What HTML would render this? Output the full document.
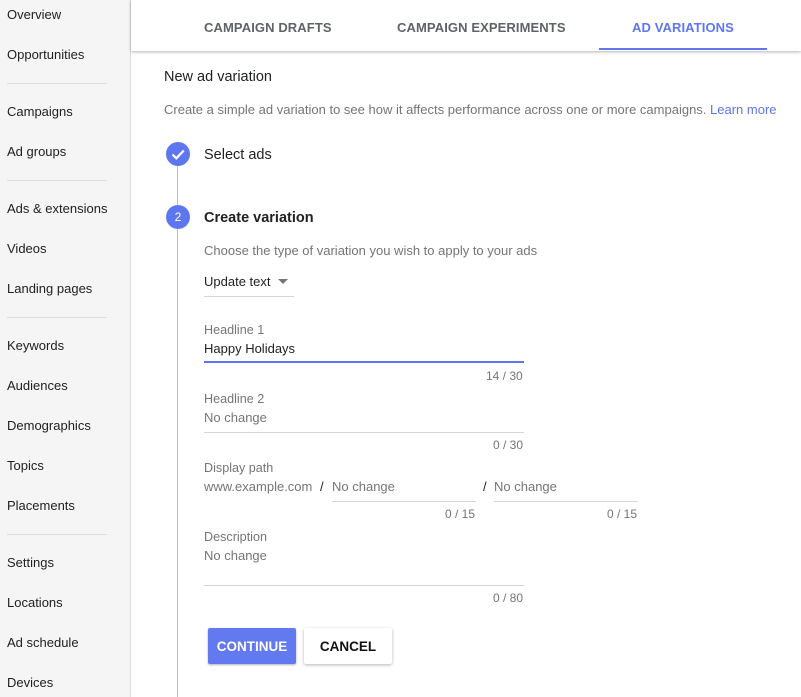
<!DOCTYPE html>
<html><head><style>
*{margin:0;padding:0;box-sizing:border-box}
body{width:801px;height:697px;overflow:hidden;background:#fff;font-family:"Liberation Sans",Arial,sans-serif;position:relative;color:#202124}
.side{position:absolute;left:0;top:0;width:131px;height:697px;background:#f5f5f5;border-right:1px solid #ddd}
.si{position:absolute;left:7px;font-size:13px;color:#212121;line-height:16px;margin-top:1px}
.dv{position:absolute;left:7px;width:100px;height:1px;background:#ddd}
.t{position:absolute;font-size:13px;line-height:16px;white-space:nowrap;margin-top:1px}
.tab{position:absolute;top:20px;font-size:13px;color:#5f6368;font-weight:bold;letter-spacing:.1px}
.ln{position:absolute;height:1px;background:#d6d6d6}
.g{color:#757575}
.c{position:absolute;font-size:12px;color:#757575;margin-top:1px}
</style></head><body>
<div class="side">
<div class="si" style="top:6px">Overview</div>
<div class="si" style="top:46px">Opportunities</div>
<div class="dv" style="top:83px"></div>
<div class="si" style="top:103px">Campaigns</div>
<div class="si" style="top:143px">Ad groups</div>
<div class="dv" style="top:180px"></div>
<div class="si" style="top:200px">Ads &amp; extensions</div>
<div class="si" style="top:240px">Videos</div>
<div class="si" style="top:280px">Landing pages</div>
<div class="dv" style="top:317px"></div>
<div class="si" style="top:337px">Keywords</div>
<div class="si" style="top:377px">Audiences</div>
<div class="si" style="top:417px">Demographics</div>
<div class="si" style="top:457px">Topics</div>
<div class="si" style="top:497px">Placements</div>
<div class="dv" style="top:534px"></div>
<div class="si" style="top:554px">Settings</div>
<div class="si" style="top:594px">Locations</div>
<div class="si" style="top:634px">Ad schedule</div>
<div class="si" style="top:674px">Devices</div>
</div>
<div style="position:absolute;left:131px;top:0;width:670px;height:51px;background:#fff;box-shadow:0 1px 3px rgba(0,0,0,.3)"></div>
<div class="tab" style="left:204px">CAMPAIGN DRAFTS</div>
<div class="tab" style="left:397px">CAMPAIGN EXPERIMENTS</div>
<div class="tab" style="left:632px;color:#5e76f0">AD VARIATIONS</div>
<div style="position:absolute;left:599px;top:48px;width:168px;height:2px;background:#5e76f0"></div>

<div class="t" style="left:164px;top:68px;font-size:14.5px">New ad variation</div>
<div class="t g" style="left:164px;top:101px;font-size:13px">Create a simple ad variation to see how it affects performance across one or more campaigns. <span style="color:#5e76f0">Learn more</span></div>

<div style="position:absolute;left:177px;top:165px;width:1px;height:532px;background:#bdbdbd"></div>
<div style="position:absolute;left:166px;top:142px;width:24px;height:24px;border-radius:50%;background:#5e76f0"><svg width="24" height="24"><path d="M6.5 12.5l3.8 3.8 7.5-7.8" stroke="#fff" stroke-width="2.2" fill="none"/></svg></div>
<div class="t" style="left:204px;top:146px;font-size:14.5px">Select ads</div>
<div style="position:absolute;left:166px;top:205px;width:24px;height:24px;border-radius:50%;background:#5e76f0;color:#fff;font-size:12px;text-align:center;line-height:24px">2</div>
<div class="t" style="left:204px;top:209px;font-size:14.5px;font-weight:bold">Create variation</div>
<div class="t g" style="left:204px;top:242px;font-size:13px">Choose the type of variation you wish to apply to your ads</div>
<div class="t" style="left:204px;top:273px">Update text</div>
<div style="position:absolute;left:278px;top:279px;border:5px solid transparent;border-top-color:#757575;border-bottom:0"></div>
<div class="ln" style="left:204px;top:296px;width:90px"></div>

<div class="t g" style="left:204px;top:321px;font-size:12.6px">Headline 1</div>
<div class="t" style="left:204px;top:340px">Happy Holidays</div>
<div style="position:absolute;left:204px;top:361px;width:320px;height:2px;background:#5e76f0"></div>
<div class="c" style="left:486px;top:368px">14 / 30</div>

<div class="t g" style="left:204px;top:390px;font-size:12.6px">Headline 2</div>
<div class="t g" style="left:204px;top:409px">No change</div>
<div class="ln" style="left:204px;top:432px;width:320px"></div>
<div class="c" style="left:493px;top:437px">0 / 30</div>

<div class="t g" style="left:204px;top:459px;font-size:12.6px">Display path</div>
<div class="t g" style="left:204px;top:478px">www.example.com</div>
<div class="t" style="left:320px;top:478px">/</div>
<div class="t g" style="left:332px;top:478px">No change</div>
<div class="ln" style="left:332px;top:501px;width:144px"></div>
<div class="c" style="left:445px;top:506px">0 / 15</div>
<div class="t" style="left:483px;top:478px">/</div>
<div class="t g" style="left:494px;top:478px">No change</div>
<div class="ln" style="left:494px;top:501px;width:144px"></div>
<div class="c" style="left:607px;top:506px">0 / 15</div>

<div class="t g" style="left:204px;top:528px;font-size:12.6px">Description</div>
<div class="t g" style="left:204px;top:547px">No change</div>
<div class="ln" style="left:204px;top:585px;width:320px"></div>
<div class="c" style="left:493px;top:590px">0 / 80</div>

<div style="position:absolute;left:208px;top:628px;width:88px;height:36px;background:#6279ef;border-radius:2px;box-shadow:0 1px 2px rgba(0,0,0,.3);color:#fff;font-weight:bold;font-size:13.5px;text-align:center;line-height:37px">CONTINUE</div>
<div style="position:absolute;left:304px;top:628px;width:88px;height:36px;background:#fff;border-radius:2px;box-shadow:0 1px 3px rgba(0,0,0,.3);color:#111;font-weight:bold;font-size:13.5px;text-align:center;line-height:37px">CANCEL</div>
</body></html>
